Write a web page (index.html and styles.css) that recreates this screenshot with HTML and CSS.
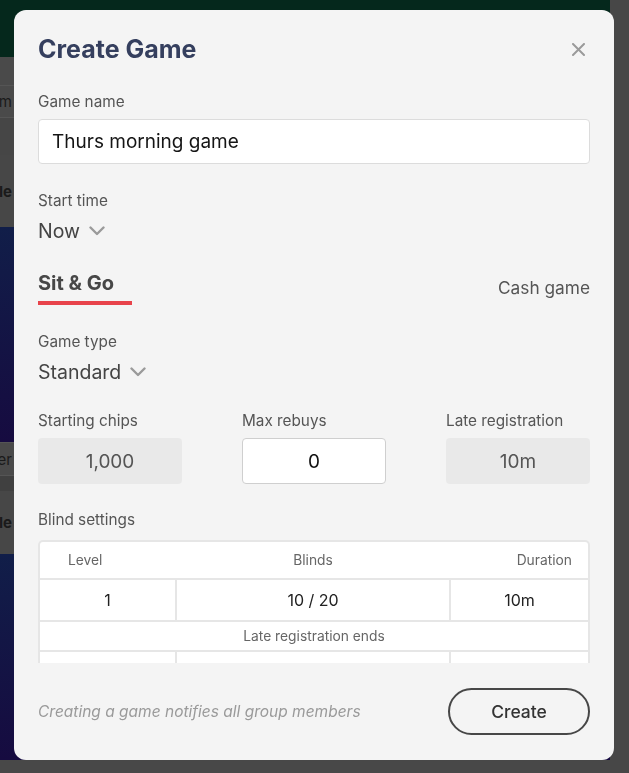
FILE: index.html
```html
<!DOCTYPE html>
<html lang="en">
<head>
    <meta charset="UTF-8">
    <title>Create Game</title>
    <link rel="stylesheet" href="styles.css">
</head>
<body>
    <!-- Pagina por tras do modal (escurecida) -->
    <div class="page">
        <div class="page-main">
            <div class="hero"></div>
            <div class="bg-row bg-row-top"></div>
            <div class="bg-row bg-row-line"><span class="bg-text">Room</span></div>
            <div class="bg-row bg-row-gap"></div>
            <div class="bg-row bg-row-head"><span class="bg-text bg-bold">Schedule</span></div>
            <div class="banner banner-a"></div>
            <div class="bg-row bg-row-line2"><span class="bg-text">Dinner</span></div>
            <div class="bg-row bg-row-band"></div>
            <div class="bg-row bg-row-head2"><span class="bg-text bg-bold">Schedule</span></div>
            <div class="banner banner-b"></div>
        </div>
        <div class="page-side"></div>
    </div>

    <!-- Modal -->
    <div class="modal">
        <div class="modal-header">
            <h2 class="modal-title">Create Game</h2>
            <button class="close-btn" aria-label="Close">
                <svg width="13" height="13" viewBox="0 0 13 13"><path d="M1 1 L12 12 M12 1 L1 12" stroke="#9a9a9a" stroke-width="2" stroke-linecap="round"/></svg>
            </button>
        </div>

        <div class="modal-body">
            <label class="field-label">Game name</label>
            <div class="text-input">Thurs morning game</div>

            <label class="field-label label-start">Start time</label>
            <div class="select">
                <span>Now</span>
                <svg width="16" height="10" viewBox="0 0 16 10"><path d="M1.5 1.5 L8 8 L14.5 1.5" fill="none" stroke="#9a9a9a" stroke-width="2.4" stroke-linecap="round" stroke-linejoin="round"/></svg>
            </div>

            <div class="tabs">
                <div class="tab tab-active">Sit &amp; Go</div>
                <div class="tab tab-other">Cash game</div>
            </div>

            <label class="field-label label-type">Game type</label>
            <div class="select">
                <span>Standard</span>
                <svg width="16" height="10" viewBox="0 0 16 10"><path d="M1.5 1.5 L8 8 L14.5 1.5" fill="none" stroke="#9a9a9a" stroke-width="2.4" stroke-linecap="round" stroke-linejoin="round"/></svg>
            </div>

            <div class="options">
                <div class="option">
                    <label class="field-label">Starting chips</label>
                    <div class="num-box num-disabled">1,000</div>
                </div>
                <div class="option">
                    <label class="field-label">Max rebuys</label>
                    <div class="num-box num-input">0</div>
                </div>
                <div class="option">
                    <label class="field-label">Late registration</label>
                    <div class="num-box num-disabled">10m</div>
                </div>
            </div>

            <label class="field-label label-blinds">Blind settings</label>
            <div class="blind-table">
                <div class="blind-head">
                    <span class="head-level">Level</span>
                    <span class="head-blinds">Blinds</span>
                    <span class="head-duration">Duration</span>
                </div>
                <div class="cell">1</div>
                <div class="cell">10 / 20</div>
                <div class="cell">10m</div>
                <div class="cell cell-note">Late registration ends</div>
                <div class="cell">2</div>
                <div class="cell">15 / 30</div>
                <div class="cell">10m</div>
            </div>
        </div>

        <div class="modal-footer">
            <span class="footer-note">Creating a game notifies all group members</span>
            <button class="create-btn">Create</button>
        </div>
    </div>
</body>
</html>
```
FILE: styles.css
```css
/* Modal de criacao de jogo */
body {
    margin: 0;
    font-family: Inter, "Noto Sans", sans-serif;
    background-color: #484848;
    overflow: hidden;
}
.page {
    display: flex;
    height: 773px;
}
.page-main {
    width: 610px;
    display: flex;
    flex-direction: column;
}
.page-side {
    flex: 1;
    background-color: #474747;
}
.hero {
    height: 57px;
    background-color: #05281c;
}
.bg-row {
    background-color: #4a4a4a;
    display: flex;
    align-items: center;
}
.bg-row-top {
    height: 28px;
    border-bottom: 1px solid #555;
}
.bg-row-line {
    height: 31px;
    border-bottom: 1px solid #555;
}
.bg-row-gap {
    height: 37px;
    background-color: #464646;
}
.bg-row-head {
    height: 72px;
    background-color: #474747;
}
.bg-row-line2 {
    height: 32px;
    border-top: 1px solid #555;
    border-bottom: 1px solid #555;
}
.bg-row-band {
    height: 15px;
    background-color: #404040;
}
.bg-row-head2 {
    height: 63px;
    background-color: #474747;
}
.bg-text {
    width: 12px;
    overflow: hidden;
    display: flex;
    justify-content: flex-end;
    white-space: nowrap;
    font-size: 15px;
    color: #1a1a1a;
}
.bg-bold {
    font-weight: 700;
}
.banner {
    background: linear-gradient(180deg, #111e49 0%, #160b40 100%);
}
.banner-a {
    height: 215px;
}
.banner-b {
    flex: 1;
    border-bottom: 13px solid #484848;
}

.modal {
    position: fixed;
    left: 14px;
    top: 10px;
    width: 600px;
    height: 750px;
    background-color: #f4f4f4;
    border-radius: 12px;
    display: flex;
    flex-direction: column;
    overflow: hidden;
}
.modal-header {
    display: flex;
    justify-content: space-between;
    align-items: center;
    padding: 23px 29px 0 24px;
}
.modal-title {
    margin: 0;
    font-size: 25px;
    line-height: 32px;
    font-weight: 700;
    color: #353f5e;
}
.close-btn {
    background: none;
    border: none;
    padding: 0;
    width: 13px;
    height: 13px;
    display: flex;
    cursor: pointer;
}
.modal-body {
    flex: 1;
    overflow: hidden;
    padding: 27px 24px 0 24px;
}
.field-label {
    display: block;
    font-size: 15.3px;
    line-height: 20px;
    color: #555;
}
.text-input {
    margin-top: 7px;
    height: 43px;
    border: 1px solid #dcdcdc;
    border-radius: 4px;
    background-color: #fff;
    padding: 0 13px;
    display: flex;
    align-items: center;
    font-size: 19px;
    color: #151515;
}
.label-start {
    margin-top: 27px;
}
.select {
    margin-top: 7px;
    display: flex;
    align-items: center;
    gap: 9px;
    font-size: 19.5px;
    line-height: 26px;
    color: #444;
}
.tabs {
    margin-top: 26px;
    display: flex;
    justify-content: space-between;
    align-items: flex-start;
}
.tab {
    line-height: 26px;
}
.tab-active {
    width: 94px;
    font-size: 20px;
    font-weight: 700;
    color: #474747;
    padding-bottom: 5px;
    border-bottom: 4px solid #e8434b;
}
.tab-other {
    padding-top: 5px;
    font-size: 17.3px;
    color: #555;
}
.label-type {
    margin-top: 27px;
}
.options {
    margin-top: 26px;
    display: grid;
    grid-template-columns: repeat(3, 1fr);
    gap: 60px;
}
.num-box {
    margin-top: 7px;
    height: 46px;
    box-sizing: border-box;
    border-radius: 4px;
    display: flex;
    align-items: center;
    justify-content: center;
    font-size: 19px;
}
.num-disabled {
    background-color: #e9e9e9;
    color: #555;
}
.num-input {
    background-color: #fff;
    border: 1px solid #cfcfcf;
    color: #111;
}
.label-blinds {
    margin-top: 26px;
}
.blind-table {
    margin-top: 10px;
    display: grid;
    grid-template-columns: 135px 272px 137px;
    gap: 2px;
    padding: 2px;
    background-color: #e6e6e6;
    border-radius: 5px;
}
.blind-head {
    grid-column: 1 / 4;
    display: grid;
    grid-template-columns: 135px 276px 137px;
    height: 36px;
    align-items: center;
    background-color: #fff;
    border-radius: 3px 3px 0 0;
    font-size: 13.8px;
    color: #666;
}
.head-level {
    padding-left: 28px;
}
.head-blinds {
    text-align: center;
}
.head-duration {
    text-align: right;
    padding-right: 16px;
}
.cell {
    height: 40px;
    background-color: #fff;
    display: flex;
    align-items: center;
    justify-content: center;
    font-size: 16px;
    color: #222;
}
.cell-note {
    grid-column: 1 / 4;
    height: 28px;
    font-size: 13.8px;
    color: #666;
}
.modal-footer {
    height: 97px;
    box-sizing: border-box;
    padding: 0 24px;
    display: flex;
    justify-content: space-between;
    align-items: center;
}
.footer-note {
    font-size: 15.5px;
    font-style: italic;
    color: #9a9a9a;
}
.create-btn {
    width: 142px;
    height: 47px;
    border: 2px solid #474747;
    border-radius: 24px;
    background: transparent;
    font-family: Inter, "Noto Sans", sans-serif;
    font-size: 17.5px;
    font-weight: 500;
    color: #333;
    cursor: pointer;
}
```
